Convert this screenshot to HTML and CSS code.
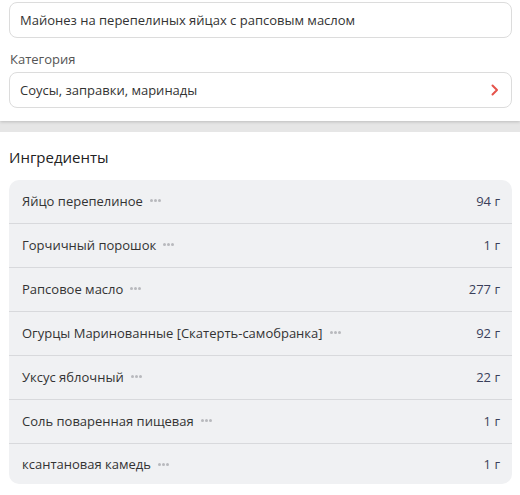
FILE: index.html
```html
<!DOCTYPE html>
<html lang="ru">
<head>
<meta charset="utf-8">
<link rel="stylesheet" href="styles.css">
</head>
<body>
<div class="page">
  <section class="top">
    <div class="field">Майонез на перепелиных яйцах с рапсовым маслом</div>
    <div class="label">Категория</div>
    <div class="field select">
      <span>Соусы, заправки, маринады</span>
      <svg class="chev" width="8" height="12" viewBox="0 0 8 12"><path d="M1.5 1.5 L6 6 L1.5 10.5" fill="none" stroke="#e5534b" stroke-width="2" stroke-linecap="round" stroke-linejoin="round"/></svg>
    </div>
  </section>
  <section class="ingredients">
    <h2 class="title">Ингредиенты</h2>
    <div class="list">
      <div class="row"><span class="name">Яйцо перепелиное</span><span class="dots"><i></i><i></i><i></i></span><span class="amt">94 г</span></div>
      <div class="row"><span class="name">Горчичный порошок</span><span class="dots"><i></i><i></i><i></i></span><span class="amt">1 г</span></div>
      <div class="row"><span class="name">Рапсовое масло</span><span class="dots"><i></i><i></i><i></i></span><span class="amt">277 г</span></div>
      <div class="row"><span class="name">Огурцы Маринованные [Скатерть-самобранка]</span><span class="dots"><i></i><i></i><i></i></span><span class="amt">92 г</span></div>
      <div class="row"><span class="name">Уксус яблочный</span><span class="dots"><i></i><i></i><i></i></span><span class="amt">22 г</span></div>
      <div class="row"><span class="name">Соль поваренная пищевая</span><span class="dots"><i></i><i></i><i></i></span><span class="amt">1 г</span></div>
      <div class="row"><span class="name">ксантановая камедь</span><span class="dots"><i></i><i></i><i></i></span><span class="amt">1 г</span></div>
    </div>
  </section>
</div>
</body>
</html>
```

FILE: styles.css
```css
* { box-sizing: border-box; }
html, body { margin: 0; padding: 0; }
body {
  font-family: "Open Sans", "Noto Sans", sans-serif;
  background: #e6e6e6;
  color: #333;
  width: 520px;
  height: 495px;
  overflow: hidden;
}
.top {
  background: #fff;
  padding: 2px 8px 13px 9px;
  box-shadow: 0 1px 3px rgba(0,0,0,0.18);
  position: relative;
  z-index: 1;
}
.field {
  height: 36px;
  border: 1px solid #dcdcdc;
  border-radius: 8px;
  padding: 0 10px;
  display: flex;
  align-items: center;
  font-size: 13px;
  color: #333;
}
.select { justify-content: space-between; padding-right: 12px; }
.chev { display: block; }
.label {
  font-size: 13px;
  color: #555;
  margin: 12px 0 4px 1px;
  line-height: 18px;
}
.ingredients {
  background: #fff;
  margin-top: 11px;
  padding: 14px 8px 14px 9px;
}
.title {
  margin: 0 0 12px 0;
  font-size: 15px;
  font-weight: 400;
  color: #222;
  line-height: 22px;
}
.list {
  background: #f0f1f3;
  border-radius: 10px;
}
.row {
  height: 44px;
  display: flex;
  align-items: center;
  padding: 0 12px 2px 13px;
  border-bottom: 1px solid #d8d9dc;
  font-size: 13px;
}
.row:last-child { border-bottom: none; height: 40px; padding-bottom: 0; }
.name { color: #333; }
.dots { display: flex; gap: 1px; margin-left: 7px; }
.dots i { width: 3px; height: 3px; border-radius: 50%; background: #b8b9bd; display: block; }
.amt { margin-left: auto; color: #3a3f5a; }
```
